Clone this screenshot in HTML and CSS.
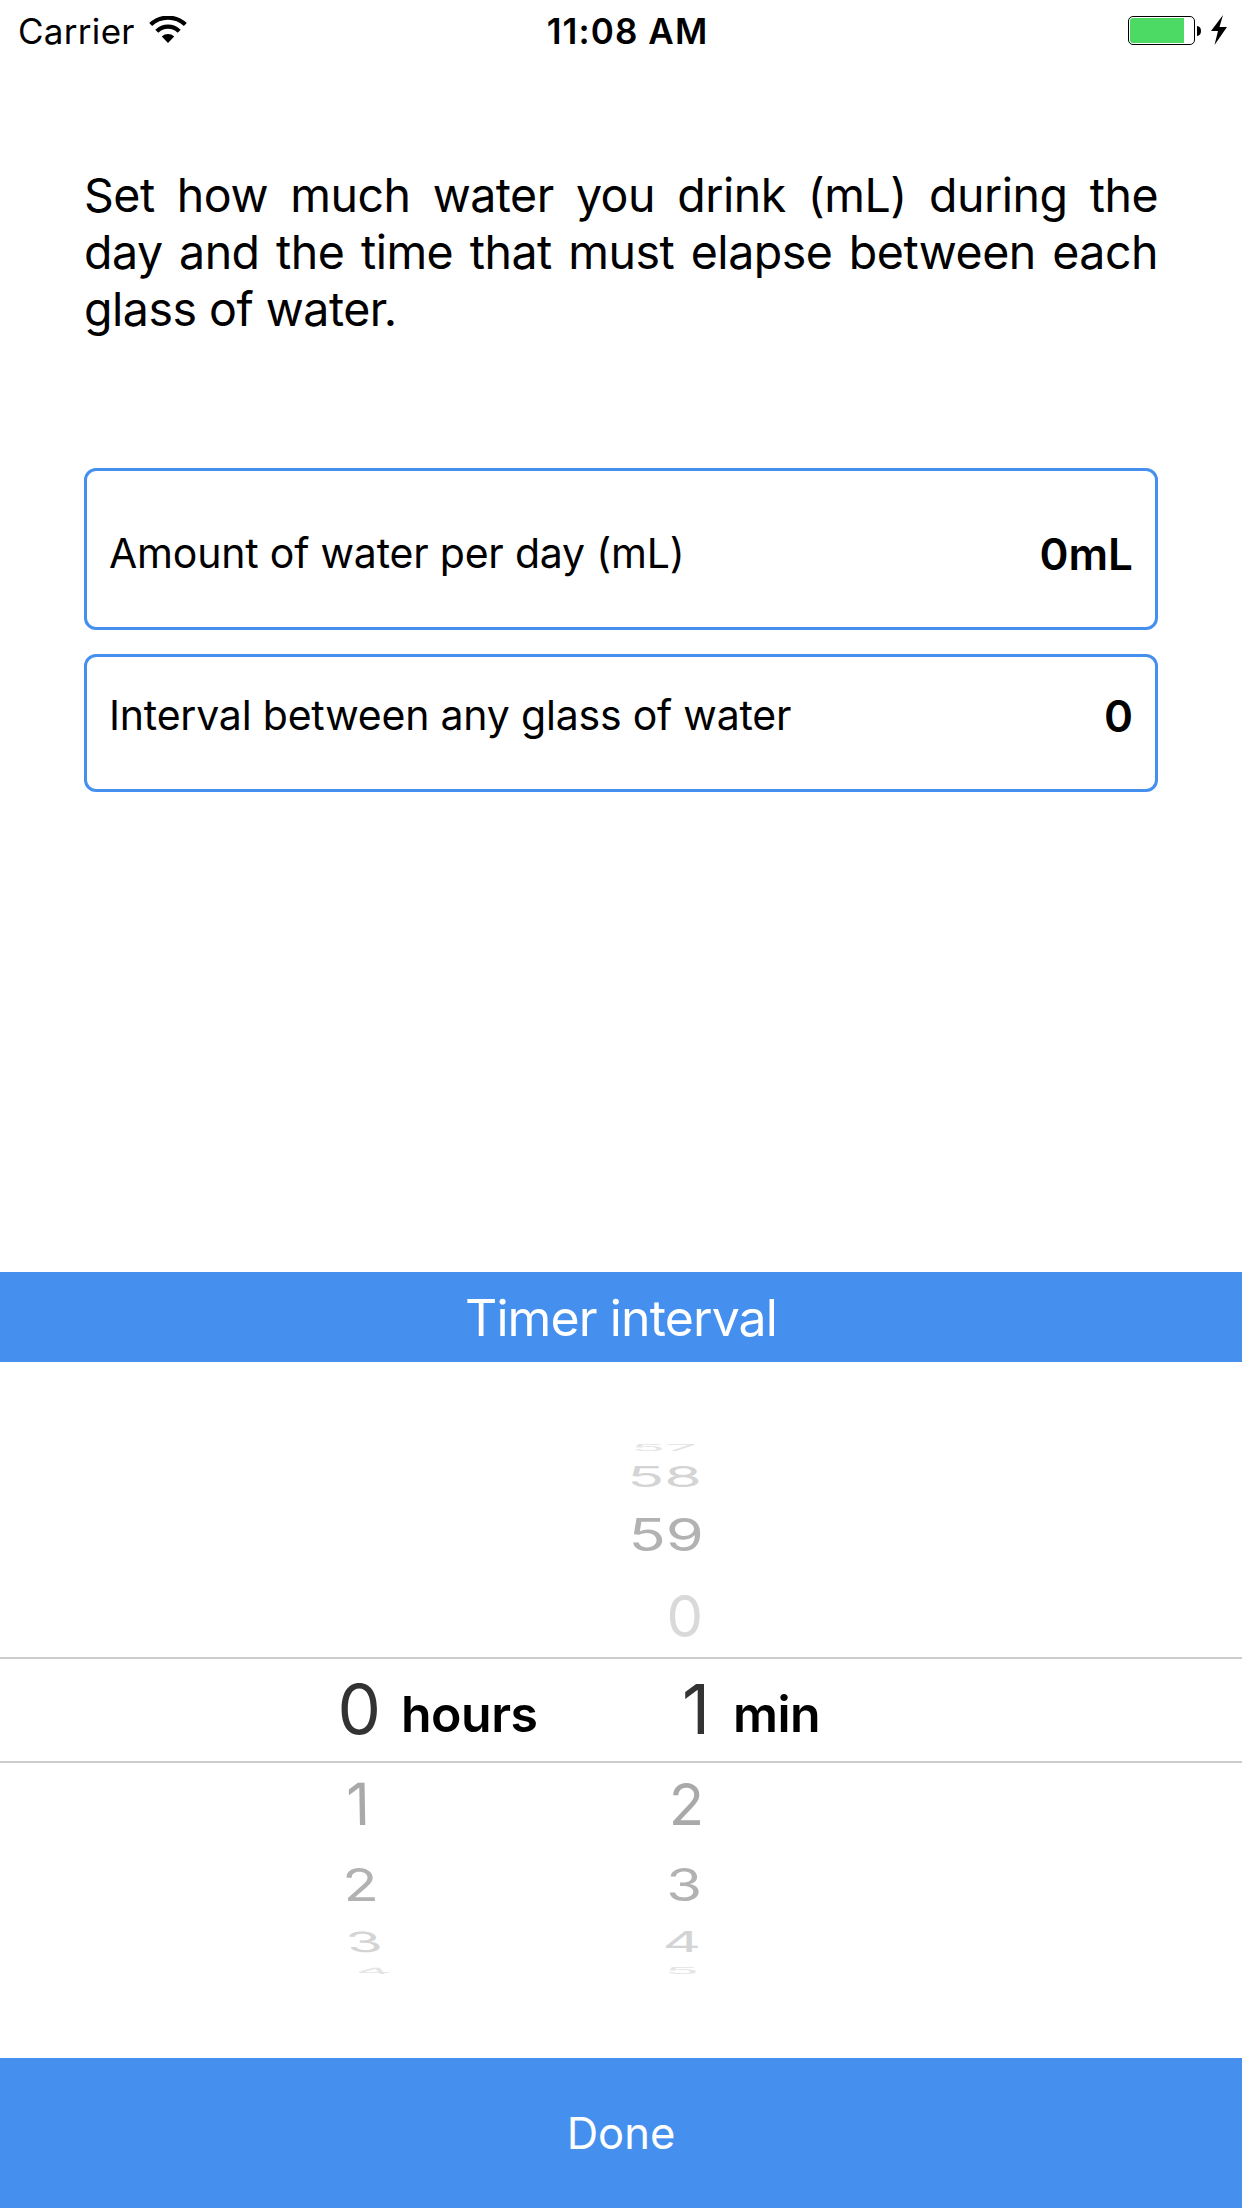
FILE: index.html
```html
<!DOCTYPE html>
<html lang="en">
<head>
<meta charset="utf-8">
<title>Water reminder</title>
<link rel="stylesheet" href="styles.css">
</head>
<body>
<div class="screen">
  <header class="status">
    <div class="status-left">
      <span class="carrier">Carrier</span>
      <svg class="wifi" width="38" height="28" viewBox="0 0 38 28" fill="none" stroke="#000">
        <path d="M1.700 8.600a25 25 0 0 1 34.600 0" stroke-width="4.200"/>
        <path d="M7.800 15.200a16 16 0 0 1 22.400 0" stroke-width="4.200"/>
        <path d="M12.800 20.600a9 9 0 0 1 12.400 0L19 27z" fill="#000" stroke="none"/>
      </svg>
    </div>
    <span class="clock">11:08 AM</span>
    <div class="status-right">
      <svg width="100" height="30" viewBox="0 0 100 30">
        <rect x=".5" y="1.5" width="66" height="28" rx="4.5" fill="#fff" stroke="#000"/>
        <path d="M5 3h51v25H5a3 3 0 0 1-3-3V6a3 3 0 0 1 3-3z" fill="#4cd964"/>
        <path d="M69 11q4 .5 4 5t-4 5z"/>
        <path d="M95 0L83 16h7l-3.500 14L99 12h-7.500z"/>
      </svg>
    </div>
  </header>

  <p class="intro">Set how much water you drink (mL) during the day and the time that must elapse between each glass of water.</p>

  <section class="fields">
    <div class="field field-amount"><span class="label">Amount of water per day (mL)</span><span class="value">0mL</span></div>
    <div class="field field-interval"><span class="label">Interval between any glass of water</span><span class="value">0</span></div>
  </section>

  <section class="sheet">
    <h1 class="sheet-title"><span>Timer interval</span></h1>
    <div class="picker">
      <div class="row edge"><span class="hour"></span><span class="minute m57">57</span></div>
      <div class="row far"><span class="hour"></span><span class="minute m58">58</span></div>
      <div class="row mid"><span class="hour"></span><span class="minute m59">59</span></div>
      <div class="row near"><span class="hour"></span><span class="minute m0">0</span></div>
      <div class="row selected"><span class="hour">0</span><span class="unit unit-hours">hours</span><span class="minute">1</span><span class="unit unit-min">min</span></div>
      <div class="row near"><span class="hour h1">1</span><span class="minute m2">2</span></div>
      <div class="row mid"><span class="hour h2">2</span><span class="minute m3">3</span></div>
      <div class="row far"><span class="hour h3">3</span><span class="minute m4">4</span></div>
      <div class="row edge"><span class="hour h4">4</span><span class="minute m5">5</span></div>
    </div>
    <button class="done"><span>Done</span></button>
  </section>
</div>
</body>
</html>
```
FILE: styles.css
```css
* { box-sizing: border-box; }
body { margin: 0; background: #fff; color: #000; font-family: Inter, "Liberation Sans", sans-serif; }
.screen { width: 1242px; height: 2208px; display: flex; flex-direction: column; overflow: hidden; }

.status { height: 60px; display: grid; grid-template-columns: 1fr auto 1fr; align-items: center; padding: 2px 14px 0 18px; }
.status-left { display: flex; align-items: center; gap: 14px; }
.carrier { font-size: 35px; line-height: 1; letter-spacing: .3px; }
.wifi { margin-top: -3px; }
.clock { font-size: 35px; line-height: 1; font-weight: 600; letter-spacing: 1.1px; padding-left: 9px; }
.status-right { display: flex; justify-content: flex-end; margin-top: -2px; }

.intro { margin: 0; padding: 107px 84px 0 84px; height: 408px; font-size: 46.5px; line-height: 57px; letter-spacing: -.5px; text-align: justify; }

.fields { display: flex; flex-direction: column; gap: 24px; padding: 0 84px; height: 804px; }
.field { display: flex; justify-content: space-between; align-items: flex-start; border: 3px solid #4590ef; border-radius: 12px; padding: 0 22px 0 22px; }
.field-amount { height: 162px; padding-top: 61px; }
.field-interval { height: 138px; padding-top: 37px; }
.label { font-size: 41px; line-height: 42px; letter-spacing: -.2px; }
.value { font-size: 44px; line-height: 44px; font-weight: 600; }

.sheet { display: flex; flex-direction: column; }
.sheet-title { margin: 0; height: 90px; display: flex; align-items: center; justify-content: center; padding-top: 2px; background: #4590ef; color: #fff; font-size: 50px; line-height: 1; font-weight: 400; letter-spacing: -.9px; }
.done { height: 150px; border: 0; padding: 2px 0 0; background: #4590ef; color: #fff; font-family: inherit; font-size: 43.5px; line-height: 1; font-weight: 400; letter-spacing: 0; }

.picker { height: 696px; padding-top: 74px; }
.row { display: grid; grid-template-columns: 380px 324px; grid-template-rows: 100%; align-items: center; font-size: 58px; line-height: 1; }
.edge { height: 24px; }
.far { height: 34px; }
.mid { height: 81px; }
.near { height: 81px; }
.selected { height: 106px; margin-top: 1px; grid-template-columns: 381px 155px 174px auto; border-top: 2px solid #ccc; border-bottom: 2px solid #ccc; color: #333; font-size: 69px; }
.selected .hour, .selected .minute { padding-bottom: 2px; }
.hour, .minute { text-align: right; transform-origin: right center; }
.unit { padding-top: 7px; font-size: 50px; font-weight: 600; letter-spacing: -.5px; color: #000; }
.unit-hours { padding-left: 20px; }
.unit-min { padding-left: 23px; }
.m57 { margin-right: 7px; color: #e4e4e4; transform: scale(.97, .15); }
.m58 { margin-right: 2px; color: #d4d4d4; transform: scale(1.05, .48); }
.m59 { color: #b2b2b2; transform: scale(1.06, .77); }
.m0 { margin-right: 1px; color: #d9d9d9; }
.h1, .m2 { color: #a9a9a9; }
.m3 { margin-right: 2px; color: #b2b2b2; transform: scale(1, .77); }
.m4 { margin-right: 3px; color: #d4d4d4; transform: scale(1.03, .48); }
.m5 { margin-right: 5px; color: #e4e4e4; transform: scale(.98, .15); }
.h1 { margin-right: 10px; transform: skewX(1deg); }
.h2 { margin-right: 2px; color: #b2b2b2; transform: skewX(4deg) scale(1, .77); }
.h3 { margin-right: -2px; color: #d4d4d4; transform: skewX(12deg) scale(1, .48); }
.h4 { margin-right: -11px; color: #e4e4e4; transform: skewX(40deg) scale(.98, .15); }
```
